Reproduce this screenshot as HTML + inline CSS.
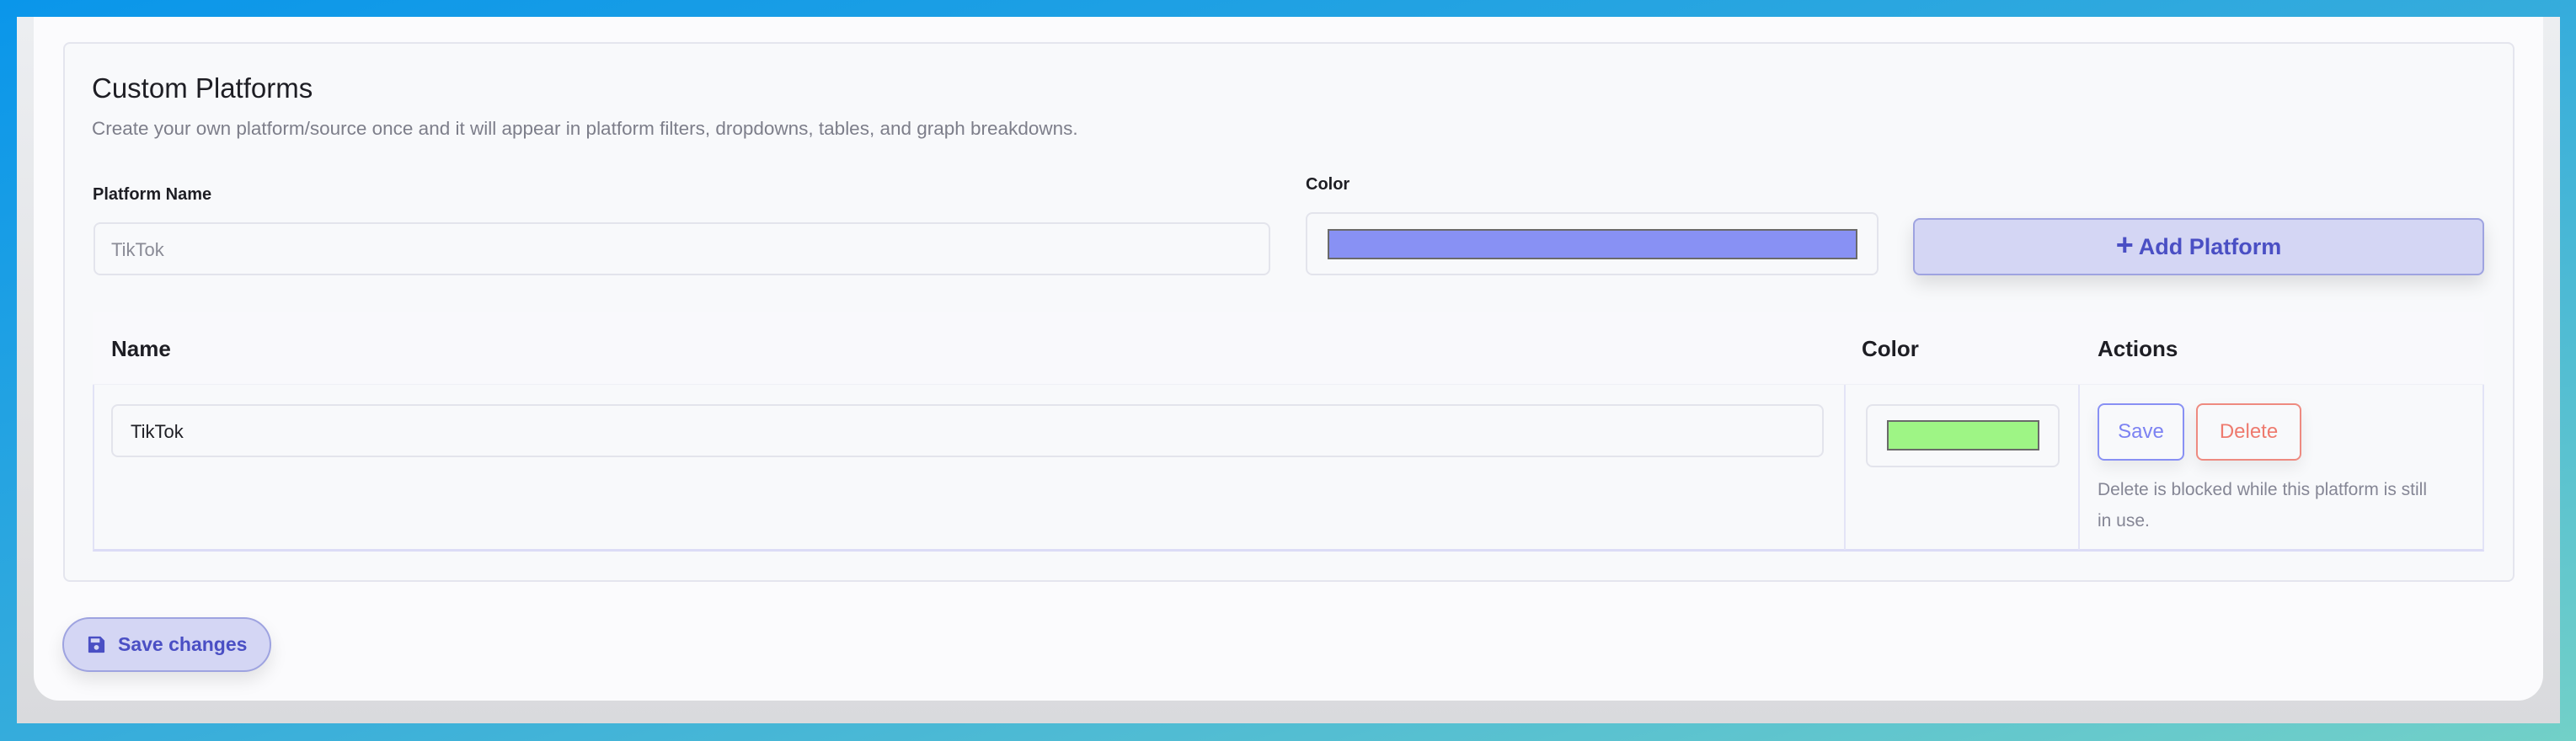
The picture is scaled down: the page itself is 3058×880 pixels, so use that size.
<!DOCTYPE html>
<html><head><meta charset="utf-8"><style>
*{box-sizing:border-box;margin:0;padding:0}
html,body{width:3058px;height:880px;overflow:hidden}
body{background:linear-gradient(to bottom right,#0a96ea 0%,#35acdc 50%,#72d0c8 100%);font-family:"Liberation Sans",sans-serif;position:relative}
.shade{position:absolute;left:20px;top:20px;width:3019px;height:839px;background:linear-gradient(180deg,#eceef1,#d9dadd)}
.card{position:absolute;left:40px;top:20px;width:2979px;height:812px;background:#fbfbfd;border-radius:0 0 30px 30px}
.sec{position:absolute;left:75px;top:50px;width:2910px;height:641px;background:#f8f9fb;border:2px solid #e4e5ee;border-radius:8px}
.abs{position:absolute}
.t{left:109px;top:86px;font-size:33px;color:#1e1e24}
.sub{left:109px;top:140px;font-size:22.5px;color:#7d7e8a}
.lbl{font-size:20px;font-weight:bold;color:#1e1e24}
.inp{background:#f8f9fb;border:2px solid #e3e4ec;border-radius:8px}
.btn{background:#d4d6f4;border:2px solid #9ea3e0;color:#4a4fc4;font-weight:bold;display:flex;align-items:center;justify-content:center}
.th{font-size:26px;font-weight:bold;color:#1e1e24}
</style></head><body>
<div class="shade"></div>
<div class="card"></div>
<div class="sec"></div>
<div class="abs t">Custom Platforms</div>
<div class="abs sub">Create your own platform/source once and it will appear in platform filters, dropdowns, tables, and graph breakdowns.</div>
<div class="abs lbl" style="left:110px;top:220px">Platform Name</div>
<div class="abs inp" style="left:111px;top:264px;width:1397px;height:63px;font-size:22px;color:#8a8b96;padding:18px 0 0 19px">TikTok</div>
<div class="abs lbl" style="left:1550px;top:208px">Color</div>
<div class="abs inp" style="left:1550px;top:252px;width:680px;height:75px"></div>
<div class="abs" style="left:1576px;top:272px;width:629px;height:36px;background:#8891f4;border:2px solid #6a6a6a"></div>
<div class="abs btn" style="left:2271px;top:259px;width:678px;height:68px;border-radius:8px;font-size:27px;box-shadow:0 10px 22px rgba(0,0,0,.12)"><span style="font-size:36px;margin-right:6px;margin-top:-4px">+</span>Add Platform</div>
<div class="abs" style="left:110px;top:370px;width:2839px;height:87px;background:#f9f9fc;border-bottom:1px solid #f0f0f6"></div>
<div class="abs th" style="left:132px;top:399px">Name</div>
<div class="abs th" style="left:2210px;top:399px">Color</div>
<div class="abs th" style="left:2490px;top:399px">Actions</div>
<div class="abs" style="left:110px;top:457px;width:2839px;height:198px;border-left:2px solid #e2e3f6;border-right:2px solid #e2e3f6;border-bottom:3px solid #dcdcf6"></div>
<div class="abs" style="left:2189px;top:457px;width:2px;height:196px;background:#e4e4f6"></div>
<div class="abs" style="left:2467px;top:457px;width:2px;height:196px;background:#e4e4f6"></div>
<div class="abs inp" style="left:132px;top:480px;width:2033px;height:63px;font-size:22px;color:#1e1e24;padding:18px 0 0 21px">TikTok</div>
<div class="abs inp" style="left:2215px;top:480px;width:230px;height:75px"></div>
<div class="abs" style="left:2240px;top:499px;width:181px;height:36px;background:#9ef585;border:2px solid #6a6a6a"></div>
<div class="abs" style="left:2490px;top:479px;width:103px;height:68px;border:2px solid #8890f4;border-radius:8px;color:#7c82f2;font-size:24px;display:flex;align-items:center;justify-content:center;box-shadow:0 8px 18px rgba(0,0,0,.07)">Save</div>
<div class="abs" style="left:2607px;top:479px;width:125px;height:68px;border:2px solid #ee8a80;border-radius:8px;color:#ee7a6e;font-size:24px;display:flex;align-items:center;justify-content:center;box-shadow:0 8px 18px rgba(0,0,0,.07)">Delete</div>
<div class="abs" style="left:2490px;top:563px;width:445px;font-size:21px;line-height:37px;color:#858695">Delete is blocked while this platform is still<br>in use.</div>
<div class="abs btn" style="left:74px;top:733px;width:248px;height:65px;border-radius:33px;font-size:23px;box-shadow:0 10px 20px rgba(0,0,0,.1);justify-content:flex-start;padding-left:27px">
<svg width="23" height="23" viewBox="0 0 24 24" style="margin-right:14px"><path d="M3 2h14l5 5v14a1 1 0 0 1-1 1H3a1 1 0 0 1-1-1V3a1 1 0 0 1 1-1z" fill="#4a4fc4"/><rect x="5" y="4.5" width="11" height="5" fill="#d4d6f4"/><circle cx="12" cy="15.5" r="3" fill="#d4d6f4"/></svg>Save changes</div>
</body></html>
